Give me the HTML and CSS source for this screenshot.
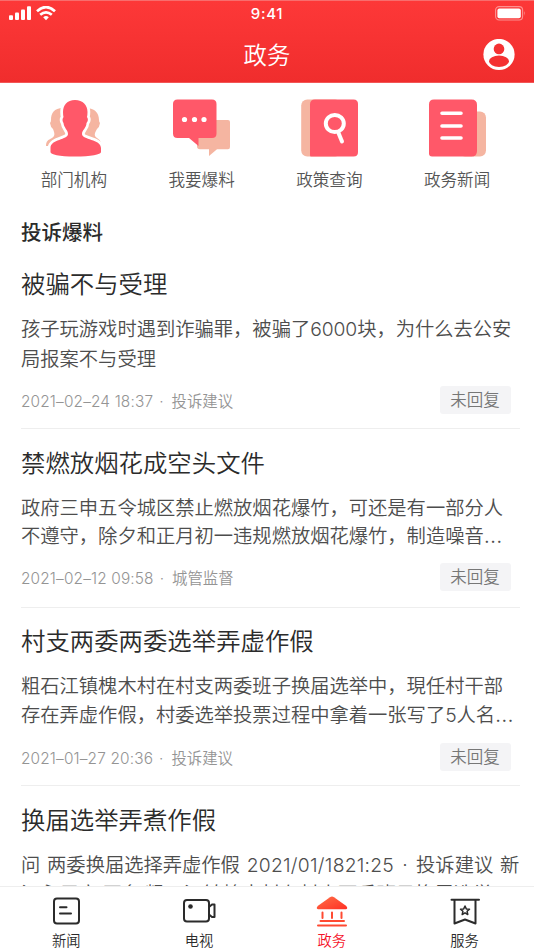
FILE: index.html
```html
<!DOCTYPE html>
<html lang="zh-CN">
<head>
<meta charset="utf-8">
<title>政务</title>
<link rel="stylesheet" href="styles.css">
</head>
<body>
<div class="app">
  <header class="header">
    <div class="status">
      <svg class="signal" width="48" height="16" viewBox="0 0 48 16" fill="#fff">
        <rect x="0" y="9.2" width="4" height="4.8" rx="1"/><rect x="6" y="6.5" width="4" height="7.5" rx="1"/><rect x="12" y="3.5" width="4" height="10.5" rx="1"/><rect x="18" y="0.2" width="4" height="13.8" rx="1"/>
        <g fill="none" stroke="#fff" stroke-width="2.7"><path d="M28 5.2Q37-3 46 5.2"/><path d="M31.2 8.8Q37 3.8 42.8 8.8"/></g>
        <path d="M34.2 11.3Q37 8.8 39.8 11.3L37 14.2Z"/>
      </svg>
      <span class="time">9:41</span>
      <svg class="battery" width="32" height="15" viewBox="0 0 32 15">
        <rect x=".6" y=".6" width="27" height="13.4" rx="3.5" fill="none" stroke="#fff" stroke-opacity=".45" stroke-width="1.1"/>
        <rect x="2.4" y="2.4" width="23.4" height="9.8" rx="2" fill="#fff"/>
        <path d="M29.3 5q1.7 2.3 0 4.8z" fill="#fff" fill-opacity=".5"/>
      </svg>
    </div>
    <div class="navbar">
      <h1>政务</h1>
      <svg class="avatar" width="32" height="32" viewBox="0 0 32 32">
        <circle cx="16" cy="15.500" r="15.6" fill="#fff"/><circle cx="16" cy="9.900" r="5.3" fill="#f43132"/><ellipse cx="16" cy="22.300" rx="10" ry="5.7" fill="#f43132"/>
      </svg>
    </div>
  </header>

  <nav class="shortcuts">
    <a class="shortcut">
      <svg width="64" height="60" viewBox="0 0 64 60">
        <path d="M22 10C13 10 10 15 10 22Q10 24 9 25Q9.500 29 12 31C14 36 14 38 11 40C7 42 5 43 5 48H32V10ZM45 10C54 10 58 15 58 22Q58 24 59 25Q58.500 29 56 31C53 36 53 38 56 40C59 42 60 43 60 48H34V10Z" fill="#f5b5a1"/>
        <path d="M34 2C26 2 22 7 22 14Q22 17 22.500 19Q20.500 22 22.500 25C23 30 27 32 27 36C27 42 9.500 41 9.500 50V54C9.500 56.500 18 58.500 34 58.500C50 58.500 60 56.500 60 54V50C60 41 41 42 41 36C41 32 45.500 30 45.500 25Q48 22 46 19Q46.500 17 46.500 14C46.500 7 42 2 34 2Z" fill="#ff5869" stroke="#fff" stroke-width="5.500" paint-order="stroke"/>
      </svg>
      <span>部门机构</span>
    </a>
    <a class="shortcut">
      <svg width="64" height="60" viewBox="0 0 64 60">
        <path d="M31 22H59Q61 22 61 24V49Q61 51.200 59 51.200H48L40 58V51.200H31Q28 51.200 28 48V25Q28 22 31 22Z" fill="#f5b5a1"/>
        <path d="M8.500 1.500H43Q47.500 1.500 47.500 6V35.500Q47.500 40 43 40H29.500V48L20 40H8.500Q4 40 4 35.500V6Q4 1.500 8.500 1.500Z" fill="#ff5869"/>
        <g fill="#fff"><circle cx="15.500" cy="21.500" r="2.600"/><circle cx="25.500" cy="21.500" r="2.600"/><circle cx="35" cy="21.500" r="2.600"/></g>
      </svg>
      <span>我要爆料</span>
    </a>
    <a class="shortcut">
      <svg width="64" height="60" viewBox="0 0 64 60">
        <rect x="4.200" y="1.500" width="40" height="57" rx="6" fill="#f5b5a1"/>
        <path d="M18 1.500H56.500Q61 1.500 61 6V54Q61 58.500 56.500 58.500H14Q13 58.500 13 57V6.500Q13 1.500 18 1.500Z" fill="#ff5869"/>
        <ellipse cx="37.800" cy="25.500" rx="9" ry="8.600" fill="none" stroke="#fff" stroke-width="4"/><path d="M41.500 35L45 43.500" stroke="#fff" stroke-width="4" stroke-linecap="round"/>
      </svg>
      <span>政策查询</span>
    </a>
    <a class="shortcut">
      <svg width="64" height="60" viewBox="0 0 64 60">
        <rect x="34" y="13.500" width="27" height="45" rx="6" fill="#f5b5a1"/>
        <path d="M9 1.500H46.500Q52 1.500 52 7V53Q52 58.500 46.500 58.500H7Q4 58.500 4 55.500V6.500Q4 1.500 9 1.500Z" fill="#ff5869"/>
        <path d="M17 15.300H36M17 28H36M17 40H36" stroke="#fff" stroke-width="3.600" stroke-linecap="round"/>
      </svg>
      <span>政务新闻</span>
    </a>
  </nav>

  <main class="feed">
    <h2>投诉爆料</h2>
    <article class="item">
      <h3>被骗不与受理</h3>
      <p>孩子玩游戏时遇到诈骗罪，被骗了<span class="num">6000</span>块，为什么去公安<br>局报案不与受理</p>
      <div class="meta"><span><span class="date">2021–02–24 18:37</span><i>·</i>投诉建议</span><span class="badge">未回复</span></div>
    </article>
    <article class="item">
      <h3>禁燃放烟花成空头文件</h3>
      <p>政府三申五令城区禁止燃放烟花爆竹，可还是有一部分人<br>不遵守，除夕和正月初一违规燃放烟花爆竹，制造噪音<span class="dots">…</span></p>
      <div class="meta"><span><span class="date">2021–02–12 09:58</span><i>·</i>城管监督</span><span class="badge">未回复</span></div>
    </article>
    <article class="item">
      <h3>村支两委两委选举弄虚作假</h3>
      <p class="tight">粗石江镇槐木村在村支两委班子换届选举中，現任村干部<br>存在弄虚作假，村委选举投票过程中拿着一张写了<span class="num">5</span>人名<span class="dots">…</span></p>
      <div class="meta"><span><span class="date">2021–01–27 20:36</span><i>·</i>投诉建议</span><span class="badge">未回复</span></div>
    </article>
    <article class="item">
      <h3>换届选举弄煮作假</h3>
      <p><span class="wide">问 两委换届选择弄虚作假 <span class="stamp">2021/01/1821:25 · </span>投诉建议 新</span><br>江永用户 匿名 粗石江镇槐木村在村支两委班子换届选举</p>
    </article>
  </main>

  <nav class="tabbar">
    <a class="tab">
      <svg width="34" height="32" viewBox="0 0 34 32" fill="none" stroke="#2b2b2b" stroke-width="2" stroke-linecap="round"><rect x="5" y="3.500" width="25" height="25" rx="3"/><path d="M11 12.200H17.500M11 18.400H22"/></svg>
      <span>新闻</span>
    </a>
    <a class="tab">
      <svg width="34" height="32" viewBox="0 0 34 32" fill="none" stroke="#2b2b2b" stroke-width="2" stroke-linejoin="round"><rect x="2" y="5" width="25" height="21.500" rx="3"/><path d="M27 12L30 9.500H32.500V22H30L27 19.500"/><circle cx="8.500" cy="11.500" r="2.300" fill="#2b2b2b" stroke="none"/></svg>
      <span>电视</span>
    </a>
    <a class="tab active">
      <svg width="34" height="32" viewBox="0 0 34 32"><defs><linearGradient id="roof" x1="0" y1="0" x2="1" y2="1"><stop offset="0" stop-color="#ff7048"/><stop offset="1" stop-color="#ff3024"/></linearGradient></defs><path d="M17 1.500Q18 1.500 19 2.200L31 10.700Q33.500 13.500 31 14.200H3Q.5 13.500 3 10.700L15 2.200Q16 1.500 17 1.500Z" fill="url(#roof)"/><path d="M7.500 17.500V23M17 17.500V23M26.500 17.500V23M5.500 26H29M3 30.500H31" stroke="#ff4a32" stroke-width="2" stroke-linecap="round"/></svg>
      <span>政务</span>
    </a>
    <a class="tab">
      <svg width="34" height="32" viewBox="0 0 34 32" fill="none" stroke="#2b2b2b" stroke-width="2" stroke-linecap="round" stroke-linejoin="round"><path d="M3.500 4.700H31M6.500 5V28.500L17 24.500L27.500 28.500V5"/><path d="M17 11L18.300 13.900L21.500 14.200L19.100 16.300L19.800 19.500L17 17.800L14.200 19.500L14.900 16.300L12.500 14.200L15.700 13.900Z" stroke-width="1.500"/></svg>
      <span>服务</span>
    </a>
  </nav>
</div>
</body>
</html>
```
FILE: styles.css
```css
* { box-sizing: border-box; }
body { margin: 0; font-family: "Noto Sans CJK SC", sans-serif; font-weight: 350; background: #fff; color: #2b2b2b; }
h1, h2, h3, p { margin: 0; font-weight: inherit; }
.app { width: 534px; height: 950px; overflow: hidden; display: flex; flex-direction: column; }

.header { flex: none; height: 83px; color: #fff; background: linear-gradient(#fd3838, #f02d2d); border-top: 1px solid #f86d6d; border-bottom: 1px solid #f25656; }
.status { height: 26px; padding: 5px 9px 0 9px; display: grid; grid-template-columns: 1fr auto 1fr; align-items: start; }
.signal { margin-top: 0; }
.time { font: 500 15px/16px Inter, sans-serif; letter-spacing: .7px; }
.battery { justify-self: end; margin-right: -2px; }
.navbar { height: 55px; padding-right: 19px; display: grid; grid-template-columns: 1fr auto 1fr; align-items: center; }
.navbar h1 { grid-column: 2; padding-left: 19px; font-size: 23.400px; line-height: 52px; margin-bottom: 2px; }
.avatar { justify-self: end; }

.shortcuts { flex: none; height: 117px; padding: 15px 13px 0 10px; display: grid; grid-template-columns: repeat(4, 1fr); }
.shortcut { display: flex; flex-direction: column; align-items: center; }
.shortcut svg { margin-left: -1px; }
.shortcut span { margin-top: 9px; font-size: 16.6px; line-height: 24px; color: #555; }

.feed { flex: 1; min-height: 0; overflow: hidden; padding: 0 14px 0 21px; }
.feed h2 { padding-top: 16px; height: 50.500px; font-size: 20.500px; line-height: 30px; font-weight: 500; }
.item { height: 178.500px; padding-top: 15.500px; border-bottom: 1px solid #eee; white-space: nowrap; }
.item h3 { font-size: 24.400px; line-height: 34px; }
.item p { margin-top: 14px; font-size: 19.300px; line-height: 28.500px; color: #4d4d4d; }
.num, .dots, .stamp { font-family: Inter, sans-serif; font-weight: 300; }
.num { letter-spacing: -.1px; }
.dots { letter-spacing: 1.200px; font-size: 22px; line-height: 1; }
.stamp { letter-spacing: .25px; word-spacing: 2.500px; }
.wide { word-spacing: 2.500px; }
.meta { margin-top: 13.500px; padding-right: 9.500px; display: flex; justify-content: space-between; align-items: center; font-size: 15.400px; line-height: 28px; color: #949494; }
.date { font-family: Inter, sans-serif; font-weight: 300; letter-spacing: .15px; }
.meta i { margin: 0 8px 0 6px; font-style: normal; font-family: Inter, sans-serif; }
.badge { width: 71px; height: 28px; border-radius: 3px; background: #f4f4f6; color: #777; font-size: 16.500px; line-height: 26px; text-align: center; position: relative; top: -1px; }

.tabbar { flex: none; height: 64px; padding: 8px 3px 0 0; border-top: 1px solid #eee; background: #fff; display: grid; grid-template-columns: repeat(4, 1fr); }
.tab { display: flex; flex-direction: column; align-items: center; }
.tab span { margin-top: 3px; font-size: 14.300px; line-height: 20px; }
.tab.active { color: #f5142a; }
```
